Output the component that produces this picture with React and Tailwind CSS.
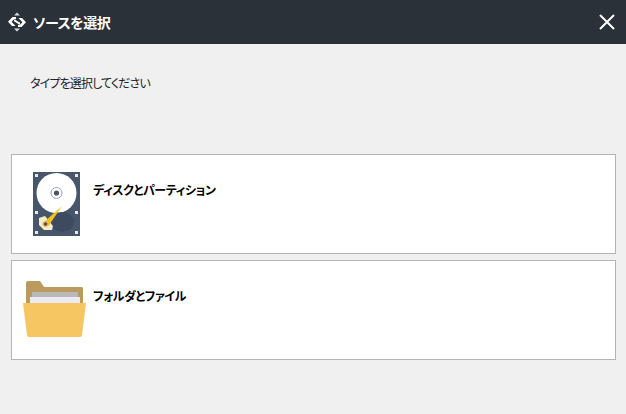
function Logo() {
  return (
    <svg width="20" height="20" viewBox="0 0 20 20" className="shrink-0">
      <path d="M10 0.5 L13 3.5 H7 Z M10 19.5 L7 16.5 H13 Z" fill="#d8dadc" />
      <path d="M5.5 5 L1 9.8 L5 14 H8.5 L4.6 9.8 L7 7.2 H9 V5 Z" fill="#ffffff" />
      <path d="M14.5 15 L19 10.2 L15 6 H11.5 L15.4 10.2 L13 12.8 H11 V15 Z" fill="#ffffff" />
      <path d="M7 8.5 C9 8.5 11 11.5 13 11.5" stroke="#ffffff" strokeWidth="1.8" fill="none" />
    </svg>
  );
}
function Disk() {
  return (
    <svg width="47" height="64" viewBox="0 0 47 64" className="shrink-0">
      <rect width="47" height="64" fill="#48566c" />
      <circle cx="23.5" cy="21" r="20" fill="#ffffff" />
      <circle cx="23.5" cy="21" r="5.5" fill="#ffffff" stroke="#9aa3af" strokeWidth="1" />
      <circle cx="23.5" cy="21" r="2.6" fill="#48566c" />
      <ellipse cx="29" cy="50" rx="12" ry="10" fill="#3e4a60" />
      <g fill="#e6e8ec">
        <rect x="2" y="2" width="3" height="3" /><rect x="42" y="2" width="3" height="3" />
        <rect x="2" y="39" width="3" height="3" /><rect x="42" y="39" width="3" height="3" />
        <rect x="2" y="59" width="3" height="3" /><rect x="42" y="59" width="3" height="3" />
      </g>
      <path d="M6 46 L12 44 L20 54 L19 58 H11 L6 53 Z" fill="#f1ecd2" />
      <path d="M29 34 L15.5 54 L11 50 Z" fill="#f2c318" />
      <circle cx="12.5" cy="52" r="3" fill="#f2c318" />
      <circle cx="12.5" cy="52" r="1.8" fill="#5a3f8a" />
    </svg>
  );
}
function Folder() {
  return (
    <svg width="64" height="57" viewBox="0 0 64 57" className="shrink-0">
      <path d="M3 3 Q3 1 5 1 H17 L21 7 H59 Q60 7 60 9 V24 H3 Z" fill="#bb9a5e" />
      <rect x="9" y="12" width="46" height="5" fill="#b9b9b9" />
      <rect x="7" y="17" width="50" height="7" fill="#ecebf3" />
      <path d="M0 23 H63 L59 55 Q59 57 57 57 H6 Q4 57 4 55 Z" fill="#f6c663" />
    </svg>
  );
}
function Card({ icon, label, iconBox }) {
  return (
    <div className="h-[100px] border border-[#b4b4b4] bg-white flex items-start">
      <div className={iconBox}>{icon}</div>
      <span className="text-[12px] leading-[16px] font-bold text-black mt-[27px] tracking-[-0.42px] [font-feature-settings:'palt']">{label}</span>
    </div>
  );
}
export default function App() {
  return (
    <div className="w-[626px] h-[414px] bg-[#f0f0f0] overflow-hidden font-['Noto_Sans_CJK_JP','Noto_Sans',sans-serif]">
      <header className="h-11 bg-[#2b3138] flex items-center pl-[7px] pr-[11px] justify-between">
        <div className="flex items-center gap-[6px]">
          <Logo />
          <span className="text-[14px] font-bold text-white tracking-[-0.5px] [font-feature-settings:'palt']">ソースを選択</span>
        </div>
        <svg width="16" height="16" viewBox="0 0 16 16"><path d="M1 1 L15 15 M15 1 L1 15" stroke="#ffffff" strokeWidth="2" /></svg>
      </header>
      <p className="mt-[31px] ml-[30px] text-[12px] leading-[16px] text-[#222] tracking-[-0.85px] [font-feature-settings:'palt']">タイプを選択してください</p>
      <div className="mt-[63px] ml-[11px] w-[605px] flex flex-col gap-[6px]">
        <Card icon={<Disk />} label="ディスクとパーティション" iconBox="w-[81px] pl-[21px] pt-[17px]" />
        <Card icon={<Folder />} label="フォルダとファイル" iconBox="w-[81px] pl-[11px] pt-[19px]" />
      </div>
    </div>
  );
}
